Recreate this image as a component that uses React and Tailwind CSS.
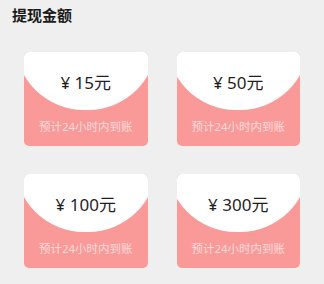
const amounts = [15, 50, 100, 300];

const WithdrawCard = ({ amount }) => (
  <div className="relative h-[94px] overflow-hidden rounded-[5px] bg-[#f99a99]">
    <div className="absolute left-1/2 top-[-80px] h-[138px] w-[142px] -translate-x-1/2 rounded-full bg-white" />
    <div className="relative flex h-full flex-col items-center">
      <p className="mt-[19px] text-[17px] leading-[24px] text-[#1f1f1f]">
        ¥ {amount}元
      </p>
      <p className="mt-[24px] text-[11.5px] leading-[16px] text-[#fcdada]">
        预计24小时内到账
      </p>
    </div>
  </div>
);

export default function App() {
  return (
    <div
      className="h-[284px] w-[324px] bg-[#efefef]"
      style={{ fontFamily: '"Noto Sans", "Noto Sans CJK SC", sans-serif' }}
    >
      <h1 className="pl-[12px] pt-[5px] text-[15px] font-bold leading-[21px] text-[#1a1a1a]">
        提现金额
      </h1>
      <div className="mt-[26px] grid grid-cols-2 gap-x-[29px] gap-y-[28px] px-[24px]">
        {amounts.map((a) => (
          <WithdrawCard key={a} amount={a} />
        ))}
      </div>
    </div>
  );
}
